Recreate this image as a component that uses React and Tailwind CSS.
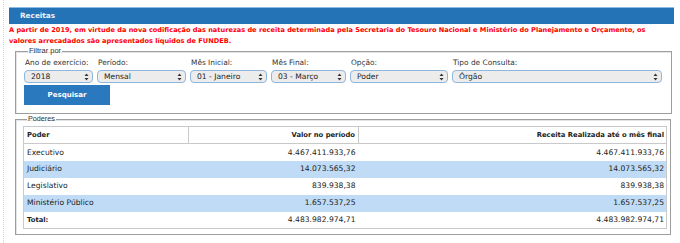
import React from "react";

const filtros = [
  { label: "Ano de exercício:", value: "2018", w: "w-[69px]" },
  { label: "Período:", value: "Mensal", w: "w-[89px]" },
  { label: "Mês Inicial:", value: "01 - Janeiro", w: "w-[77px]" },
  { label: "Mês Final:", value: "03 - Março", w: "w-[75px]" },
  { label: "Opção:", value: "Poder", w: "w-[98px]" },
  { label: "Tipo de Consulta:", value: "Órgão", w: "w-[210px]" },
];

const linhas = [
  ["Executivo", "4.467.411.933,76", "4.467.411.933,76"],
  ["Judiciário", "14.073.565,32", "14.073.565,32"],
  ["Legislativo", "839.938,38", "839.938,38"],
  ["Ministério Público", "1.657.537,25", "1.657.537,25"],
];

const Setas = () => (
  <svg width="5" height="8" viewBox="0 0 5 8" className="shrink-0">
    <path d="M2.5 0.5 L4.5 3 L0.5 3 Z" fill="#333" />
    <path d="M2.5 7.5 L4.5 5 L0.5 5 Z" fill="#333" />
  </svg>
);

const App = () => {
  return (
    <div className="w-[680px] h-[243px] bg-white overflow-hidden font-['DejaVu_Sans',sans-serif] text-[#222]">
      <div className="ml-[3px] h-full border-l border-dotted border-[#c3d8ec] pl-[5px] pr-[6px] pt-[7px]">
        {/* barra de título */}
        <div className="h-[17px] bg-[#2473b7] border-t border-[#8dbbe2] flex items-center pl-[11px]">
          <span className="text-[#eef3f8] font-bold text-[7.3px]">Receitas</span>
        </div>

        <div className="pt-[1px] text-[#f00] font-bold text-[6.6px] leading-[11px] whitespace-nowrap">
          <p>
            A partir de 2019, em virtude da nova codificação das naturezas de receita determinada pela Secretaria do
            Tesouro Nacional e Ministério do Planejamento e Orçamento, os
          </p>
          <p>valores arrecadados são apresentados líquidos de FUNDEB.</p>
        </div>

        {/* filtros */}
        <fieldset className="ml-[6px] mr-[2px] border border-[#9e9e9e] shadow-[inset_1px_1px_0_#e4e4e4] pl-[8px] pr-[8px] pb-[8px] pt-[3px]">
          <legend className="ml-[4px] px-[1px] font-['Liberation_Sans',sans-serif] text-[7.5px] leading-[8px] text-[#333]">
            Filtrar por
          </legend>
          <div className="flex gap-[4px]">
            {filtros.map((f) => (
              <div key={f.label} className="flex flex-col">
                <span className="text-[7.4px] leading-[9px] pl-[1px] text-[#333]">{f.label}</span>
                <div
                  className={`${f.w} mt-[3px] h-[13px] rounded-[4px] border border-[#8fb6dc] bg-[#ececec] flex items-center justify-between pl-[6px] pr-[3px] text-[7.6px] text-[#222]`}
                >
                  <span>{f.value}</span>
                  <Setas />
                </div>
              </div>
            ))}
          </div>
          <button className="mt-[2px] w-[86px] h-[20px] bg-[#2a78be] text-white font-bold text-[7px] flex items-center justify-center">
            Pesquisar
          </button>
        </fieldset>

        {/* poderes */}
        <fieldset className="ml-[6px] mr-[3px] mt-[1px] border border-[#9e9e9e] shadow-[inset_1px_1px_0_#e4e4e4] pl-[7px] pr-[3px] pb-[5px] pt-[3px]">
          <legend className="ml-[4px] px-[1px] font-['Liberation_Sans',sans-serif] text-[7.2px] leading-[8px] text-[#333]">
            Poderes
          </legend>
          <table className="w-full border border-[#c9c9c9] border-collapse text-[7.6px]">
            <thead>
              <tr className="h-[17px] border-b border-[#c9c9c9]">
                <th className="w-[165px] border-r border-[#c9c9c9] text-left font-bold text-[6.8px] pl-[3px]">Poder</th>
                <th className="w-[170px] border-r border-[#c9c9c9] text-right font-bold text-[6.8px] pr-[3px]">
                  Valor no período
                </th>
                <th className="text-right font-bold text-[6.8px] pr-[2px]">Receita Realizada até o mês final</th>
              </tr>
            </thead>
            <tbody>
              {linhas.map((l, i) => (
                <tr key={l[0]} className={`h-[17px] ${i % 2 === 1 ? "bg-[#bfdbf5]" : "bg-white"}`}>
                  <td className="pl-[3px]">{l[0]}</td>
                  <td className="text-right pr-[3px]">{l[1]}</td>
                  <td className="text-right pr-[2px]">{l[2]}</td>
                </tr>
              ))}
              <tr className="h-[17px]">
                <td className="pl-[3px] font-bold text-[6.8px]">Total:</td>
                <td className="text-right pr-[3px]">4.483.982.974,71</td>
                <td className="text-right pr-[2px]">4.483.982.974,71</td>
              </tr>
            </tbody>
          </table>
        </fieldset>
      </div>
    </div>
  );
};

export default App;
